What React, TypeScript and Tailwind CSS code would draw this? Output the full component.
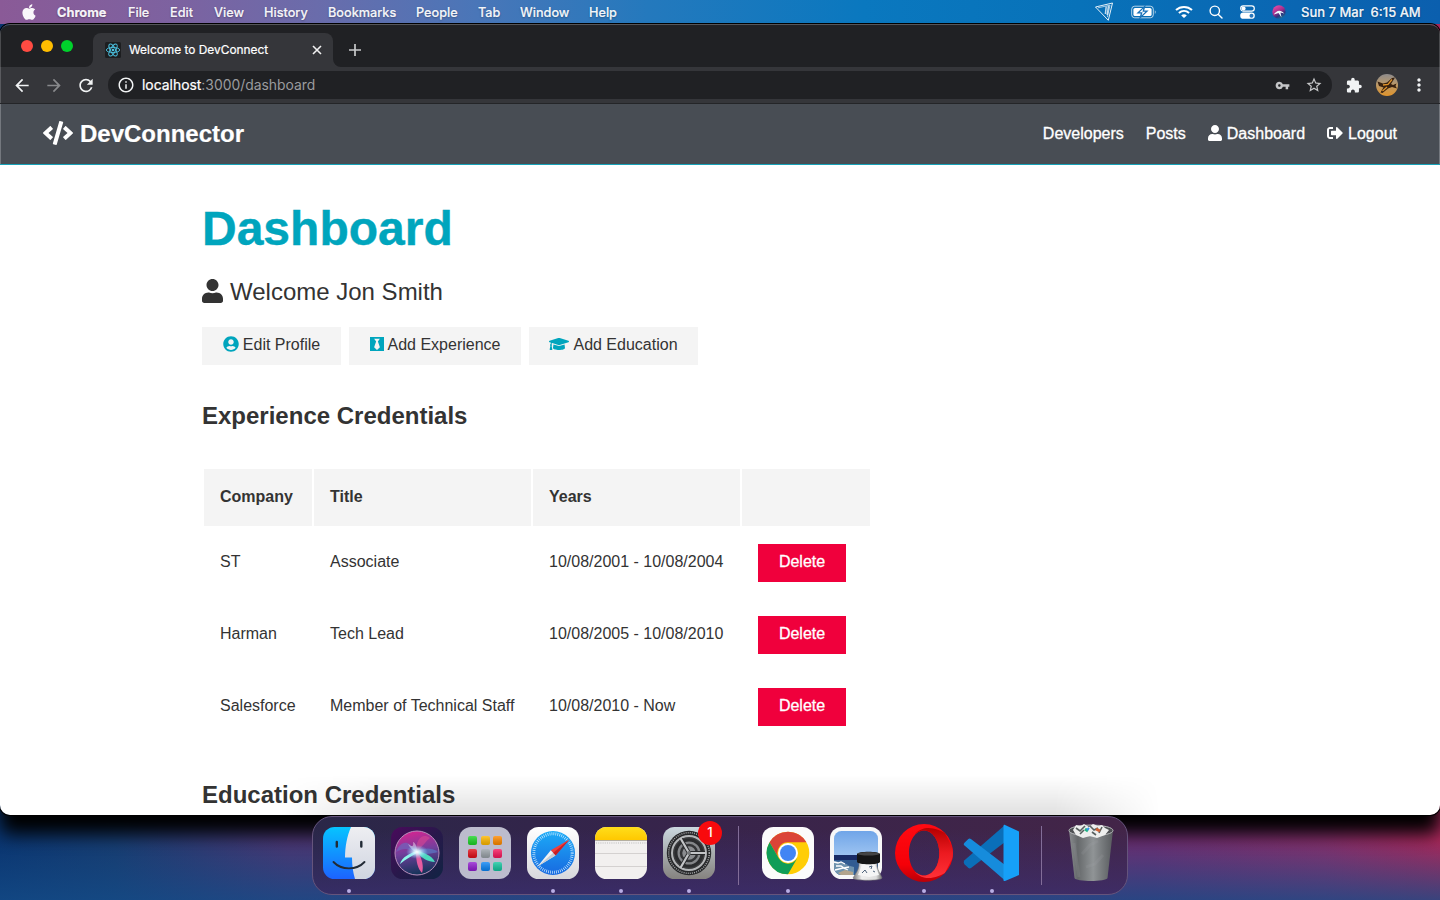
import React from "react";
import {
  FaApple,
  FaBlackTie,
  FaCode,
  FaGraduationCap,
  FaSignOutAlt,
  FaUser,
  FaUserCircle,
} from "react-icons/fa";
import {
  MdArrowBack,
  MdArrowForward,
  MdExtension,
  MdInfoOutline,
  MdMoreVert,
  MdRefresh,
  MdStarOutline,
  MdVpnKey,
} from "react-icons/md";

const menuItems = [
  { label: "File", width: "w-[42px]" },
  { label: "Edit", width: "w-[44px]" },
  { label: "View", width: "w-[50px]" },
  { label: "History", width: "w-[64px]" },
  { label: "Bookmarks", width: "w-[88px]" },
  { label: "People", width: "w-[62px]" },
  { label: "Tab", width: "w-[42px]" },
  { label: "Window", width: "w-[69px]" },
  { label: "Help", width: "w-[40px]" },
];

const experience = [
  { company: "ST", title: "Associate", years: "10/08/2001 - 10/08/2004" },
  { company: "Harman", title: "Tech Lead", years: "10/08/2005 - 10/08/2010" },
  { company: "Salesforce", title: "Member of Technical Staff", years: "10/08/2010 - Now" },
];

function MenuBar() {
  return (
    <div className="flex h-6 items-center whitespace-nowrap bg-[linear-gradient(90deg,#8a5a97_0%,#7d62a0_12%,#6a6cab_22%,#4a76b8_33%,#2479bd_45%,#0a78bf_60%,#0872b9_75%,#0a66b2_90%,#0b5fae_100%)] pt-px font-['Inter','Noto_Sans',sans-serif] text-[13px] font-medium text-white/95 [text-shadow:0_1px_2px_rgb(0_0_0/0.3)] [-webkit-text-stroke:0.2px]">
      <FaApple className="mb-0.5 ml-5 mr-[19px] h-[18px] w-[18px]" />
      <span className="w-[71px] text-[12.8px] font-bold">Chrome</span>
      {menuItems.map((m) => (
        <span key={m.label} className={`${m.width} text-[12.7px]`}>
          {m.label}
        </span>
      ))}
      <div className="ml-auto flex items-center">
        <svg width="20" height="20" viewBox="0 0 20 20" fill="none" stroke="#fff" strokeWidth="0.9" className="mb-px mr-[17px]">
          <path d="M1.500 5 18.500 1 14.300 18.300Z" />
          <path d="M4 5.8 16 3.2 13.4 15" opacity=".7" />
          <path d="M12.2 4.5 11.4 12M14.5 4l-1.3 9" strokeWidth="1.5" opacity=".75" />
        </svg>
        <svg width="26" height="14" viewBox="0 0 26 14" fill="none" className="mb-0.5 mr-[18px]">
          <rect x=".7" y="1.2" width="21.6" height="11.6" rx="3" stroke="#fff" strokeOpacity=".7" />
          <rect x="2.4" y="2.9" width="18.2" height="8.2" rx="1.6" fill="#fff" />
          <path d="M13.6 1.600 7 7.800h3.700L9.200 12.600l6.800-6.400h-3.700z" fill="#fff" stroke="#1670b8" strokeWidth="1.3" />
          <path d="M23.8 5.2v3.6c1.2-.5 1.2-3.1 0-3.6Z" fill="#fff" fillOpacity=".7" />
        </svg>
        <svg width="18" height="14" viewBox="0 0 18 14" fill="none" stroke="#fff" strokeWidth="2" className="mb-0.5 mr-[16px]">
          <path d="M1 5.1C5.5.9 12.5.9 17 5.1M3.9 8.1c3-2.7 7.2-2.7 10.2 0" />
          <path d="M9 13 6.2 10.4c1.7-1.5 3.900-1.500 5.600 0Z" fill="#fff" stroke="none" />
        </svg>
        <svg width="14" height="14" viewBox="0 0 14 14" fill="none" stroke="#fff" strokeWidth="1.4" strokeLinecap="round" className="mb-0.5 mr-[17px]">
          <circle cx="5.8" cy="5.8" r="4.7" />
          <path d="m9.4 9.4 3.6 3.7" />
        </svg>
        <svg width="15" height="14" viewBox="0 0 15 14" className="mb-px mr-[17px]">
          <rect x=".7" y=".9" width="13.6" height="5.2" rx="2.6" fill="none" stroke="#fff" strokeWidth="1.2" />
          <circle cx="3.6" cy="3.5" r="2" fill="#fff" />
          <rect x=".2" y="7.5" width="14.6" height="6.3" rx="3.15" fill="#fff" />
          <circle cx="11.5" cy="10.65" r="2" fill="#2a77bb" />
        </svg>
        <svg width="14" height="14" viewBox="0 0 14 14" className="mb-0.5 mr-[15px]">
          <defs>
            <linearGradient id="siri-small" x1=".2" y1="0" x2=".8" y2="1">
              <stop offset="0" stopColor="#f04ba6" />
              <stop offset=".45" stopColor="#a32e8c" />
              <stop offset=".7" stopColor="#2d347e" />
              <stop offset="1" stopColor="#147f9c" />
            </linearGradient>
          </defs>
          <circle cx="7" cy="7" r="6.7" fill="url(#siri-small)" />
          <path d="M1.8 9.5C4 6 8 3.5 12.3 8.500L8.500 7.500l1 5-3-4.500Z" fill="#e9fbff" />
        </svg>
        <span className="mr-[18px] w-[121px] whitespace-pre text-[13px]">Sun 7 Mar  6:15 AM</span>
      </div>
    </div>
  );
}

function ReactFavicon() {
  return (
    <svg width="16" height="16" viewBox="0 0 16 16" className="ml-3">
      <rect width="16" height="16" rx="1.5" fill="#1d1e20" />
      <g fill="none" stroke="#4cc3e2" strokeWidth=".9">
        <ellipse cx="8" cy="8" rx="6.7" ry="2.6" />
        <ellipse cx="8" cy="8" rx="6.7" ry="2.6" transform="rotate(60 8 8)" />
        <ellipse cx="8" cy="8" rx="6.7" ry="2.6" transform="rotate(120 8 8)" />
      </g>
      <circle cx="8" cy="8" r="1.3" fill="#4cc3e2" />
    </svg>
  );
}

function Avatar() {
  return (
    <svg width="22" height="22" viewBox="0 0 22 22" className="ml-[13px]">
      <defs>
        <linearGradient id="sky" x1="0" y1="0" x2="0" y2="1">
          <stop offset="0" stopColor="#8d8b8c" />
          <stop offset=".45" stopColor="#b9996c" />
          <stop offset="1" stopColor="#e0942b" />
        </linearGradient>
      </defs>
      <circle cx="11" cy="11" r="11" fill="url(#sky)" />
      <path d="m1.500 7.500 5.500 2 4-1 5-4.500 3-.5-4 6.500 2 1 3.500-1.500-1 2.500 1.500 2.500-5-1.500-4 1.500-5.500 4.500-2-.5 3-5-4.500-1.500Z" fill="#38210f" />
      <path d="m7 11 5-.5 4-5M6.500 17l4.500-4" stroke="#e0932a" strokeWidth="1.300" fill="none" />
    </svg>
  );
}

function TabStrip() {
  return (
    <div className="flex h-[42px] items-end bg-[#202124] shadow-[inset_1px_0_#4a4b4e,inset_-1px_0_#4a4b4e]">
      <div className="flex h-full w-[85px] items-center gap-2 pl-[21px]">
        <span className="h-3 w-3 rounded-full bg-[#ff4b42]" />
        <span className="h-3 w-3 rounded-full bg-[#ffbd00]" />
        <span className="h-3 w-3 rounded-full bg-[#00d12c]" />
      </div>
      <svg width="8" height="8" viewBox="0 0 8 8">
        <path d="M8 0v8H0a8 8 0 0 0 8-8Z" fill="#35363a" />
      </svg>
      <div className="flex h-[34px] w-60 items-center rounded-t-lg bg-[#35363a]">
        <ReactFavicon />
        <span className="ml-2 w-[180px] whitespace-nowrap font-['Inter','Noto_Sans',sans-serif] text-[11.9px] text-white [-webkit-text-stroke:0.2px]">
          Welcome to DevConnect
        </span>
        <svg width="10" height="10" viewBox="0 0 10 10" stroke="#f1f1f1" strokeWidth="1.6" className="ml-[3px]">
          <path d="m1 1 8 8M9 1 1 9" />
        </svg>
      </div>
      <svg width="8" height="8" viewBox="0 0 8 8">
        <path d="M0 0v8h8a8 8 0 0 1-8-8Z" fill="#35363a" />
      </svg>
      <svg width="12" height="12" viewBox="0 0 12 12" stroke="#c9cacc" strokeWidth="1.7" className="mb-[11px] ml-2">
        <path d="M6 0v12M0 6h12" />
      </svg>
    </div>
  );
}

function Toolbar() {
  return (
    <div className="flex h-[37px] items-center border-b border-[#242528] bg-[#35363a] text-[#f1f3f4] shadow-[inset_1px_0_#5a5b5f,inset_-1px_0_#5a5b5f]">
      <MdArrowBack className="ml-3 h-[21px] w-5" />
      <MdArrowForward className="ml-3 h-[21px] w-5 text-[#88898c]" />
      <MdRefresh className="ml-3 h-[21px] w-5" />
      <div className="ml-3 flex h-7 w-[1224px] items-center rounded-full bg-[#202124]">
        <MdInfoOutline className="ml-[9px] h-[18px] w-[18px]" />
        <span className="ml-[7px] font-['Inter','Noto_Sans',sans-serif] text-[13.9px] text-[#9a9b9e]">
          <span className="text-white [-webkit-text-stroke:0.2px]">localhost</span>:3000/dashboard
        </span>
        <MdVpnKey className="ml-auto h-[15px] w-[15px] text-[#c4c5c7]" />
        <MdStarOutline className="ml-[15px] mr-[9px] h-[18px] w-[18px] text-[#c4c5c7]" />
      </div>
      <MdExtension className="ml-[13px] h-[17px] w-[18px]" />
      <Avatar />
      <MdMoreVert className="ml-[11px] h-5 w-5" />
    </div>
  );
}

function SiteNav() {
  return (
    <nav className="flex h-[61px] items-center justify-between border-b border-[#17a2b8] bg-[#484d54] px-[43px] pb-px text-white shadow-[inset_1px_0_#74787e,inset_-1px_0_#74787e]">
      <div className="flex items-center text-2xl font-bold [-webkit-text-stroke:0.2px]">
        <FaCode className="mb-px mr-[7px] h-6 w-[30px]" />
        <span>DevConnector</span>
      </div>
      <div className="flex items-center gap-[22px] text-base [-webkit-text-stroke:0.3px]">
        <span>Developers</span>
        <span>Posts</span>
        <span className="flex items-center gap-[5px]">
          <FaUser className="mb-0.5 h-4 w-3.5" />
          Dashboard
        </span>
        <span className="flex items-center gap-[5px]">
          <FaSignOutAlt className="mb-0.5 h-4 w-4" />
          Logout
        </span>
      </div>
    </nav>
  );
}

function DashboardPage() {
  return (
    <main className="h-[650px] overflow-hidden bg-white pl-[202px] pt-[35px] text-[#333]">
      <h1 className="h-[58px] text-5xl font-bold leading-[58px] text-[#00a5bd] [-webkit-text-stroke:0.4px]">Dashboard</h1>
      <p className="mt-[15px] flex h-[38px] items-center text-2xl">
        <FaUser className="mb-0.5 mr-[7px] h-6 w-[21px]" />
        Welcome Jon Smith
      </p>
      <div className="mt-4 flex gap-2 text-base">
        <button className="flex h-[38px] w-[139px] items-center justify-center gap-1 bg-[#f4f4f4] pb-[3px]">
          <FaUserCircle className="mb-0.5 h-4 w-4 text-[#00a5bd]" />
          Edit Profile
        </button>
        <button className="flex h-[38px] w-[172px] items-center justify-center gap-1 bg-[#f4f4f4] pb-[3px]">
          <FaBlackTie className="mb-0.5 h-4 w-3.5 text-[#00a5bd]" />
          Add Experience
        </button>
        <button className="flex h-[38px] w-[169px] items-center justify-center gap-1 bg-[#f4f4f4] pb-[3px]">
          <FaGraduationCap className="mb-0.5 h-4 w-5 text-[#00a5bd]" />
          Add Education
        </button>
      </div>
      <h2 className="mt-8 h-[38px] text-2xl font-bold leading-[38px]">Experience Credentials</h2>
      <table className="mt-8 w-[670px] table-fixed border-separate border-spacing-0.5 text-left text-base">
        <thead>
          <tr className="h-[57px]">
            <th className="w-[108px] bg-[#f4f4f4] px-4 pb-0.5">Company</th>
            <th className="w-[217px] bg-[#f4f4f4] px-4 pb-0.5">Title</th>
            <th className="w-[207px] bg-[#f4f4f4] px-4 pb-0.5">Years</th>
            <th className="w-[128px] bg-[#f4f4f4]" />
          </tr>
        </thead>
        <tbody>
          {experience.map((row) => (
            <tr key={row.company} className="h-[70px]">
              <td className="px-4 pb-[3px]">{row.company}</td>
              <td className="whitespace-nowrap px-4 pb-[3px]">{row.title}</td>
              <td className="whitespace-nowrap pb-[3px] pl-4">{row.years}</td>
              <td className="px-4">
                <button className="flex h-[38px] w-[88px] items-center justify-center bg-[#f0003c] pb-[3px] text-white [-webkit-text-stroke:0.3px]">
                  Delete
                </button>
              </td>
            </tr>
          ))}
        </tbody>
      </table>
      <h2 className="mt-8 h-[38px] text-2xl font-bold leading-[38px]">Education Credentials</h2>
    </main>
  );
}

function FinderIcon() {
  return (
    <svg width="52" height="52" viewBox="0 0 52 52">
      <defs>
        <linearGradient id="fb" x1="0" y1="0" x2="0" y2="1">
          <stop offset="0" stopColor="#06c4ff" />
          <stop offset="1" stopColor="#1c63ff" />
        </linearGradient>
        <linearGradient id="fw" x1="0" y1="0" x2="0" y2="1">
          <stop offset="0" stopColor="#eeeef2" />
          <stop offset="1" stopColor="#cfd5e0" />
        </linearGradient>
        <clipPath id="fc"><rect width="52" height="52" rx="11.5" /></clipPath>
      </defs>
      <g clipPath="url(#fc)">
        <rect width="52" height="52" fill="url(#fb)" />
        <path d="M28 0c-4 9-6 20-6 30.500h7c0 8 1 15 3 21.500h20V0Z" fill="url(#fw)" />
      </g>
      <path d="M13.8 15v4.500M38.3 15v4.500" stroke="#222b35" strokeWidth="2.4" strokeLinecap="round" />
      <path d="M10.500 35c8 8.500 23 8.500 31 0" fill="none" stroke="#222b35" strokeWidth="1.9" strokeLinecap="round" />
    </svg>
  );
}

function SiriIcon() {
  return (
    <svg width="52" height="52" viewBox="0 0 52 52">
      <defs>
        <linearGradient id="sbg" x1="0" y1="0" x2="1" y2="1">
          <stop offset="0" stopColor="#4a0a5c" />
          <stop offset=".5" stopColor="#29184b" />
          <stop offset="1" stopColor="#102443" />
        </linearGradient>
        <linearGradient id="orb" x1=".4" y1="0" x2=".6" y2="1">
          <stop offset="0" stopColor="#d22591" />
          <stop offset=".45" stopColor="#733f9d" />
          <stop offset="1" stopColor="#0e3354" />
        </linearGradient>
        <radialGradient id="glow">
          <stop offset="0" stopColor="#fff" />
          <stop offset=".3" stopColor="#d9f4ff" stopOpacity=".85" />
          <stop offset="1" stopColor="#77c6ff" stopOpacity="0" />
        </radialGradient>
      </defs>
      <rect width="52" height="52" rx="11.5" fill="url(#sbg)" />
      <circle cx="26" cy="26" r="22" fill="url(#orb)" stroke="#b98fbd" strokeWidth="1" />
      <path d="M25 25C16 10 9 16 5 25c8-5 13-3 20 0Z" fill="#6e65bd" opacity=".7" />
      <path d="M25 25C25 11 32 6 39 11c-4 3-7 8-14 14Z" fill="#dc4894" opacity=".55" />
      <path d="M25 25c7-4 14-5 22 0-7 2-14 3-22 0Z" fill="#5a7bc4" opacity=".7" />
      <path d="M26 24C19 26 11 30 9 37c6-5 12-8 17-11Z" fill="#8ef6ea" />
      <path d="M26 24c8 2 14 4 18 11-7 0-13-4-18-9Z" fill="#4bd9bd" />
      <path d="M25 25c0 10 2 17 6 21 2-7 0-14-4-21Z" fill="#e65ca0" />
      <path d="M22 15c3 1 4 6 4 10-4-1-7-4-9-8 4 3 6 3 5-2Z" fill="#fff" opacity=".45" />
      <ellipse cx="26" cy="25" rx="11" ry="7" fill="url(#glow)" />
    </svg>
  );
}

const launchColors = ["#1fd52a", "#ffb800", "#ff8a00", "#e3101c", "#9ba3a9", "#f8195e", "#9321d1", "#0e86f6", "#16c7a0"];

function LaunchpadIcon() {
  return (
    <div className="grid h-[52px] w-[52px] grid-cols-[repeat(3,9px)] content-center justify-center gap-x-[3.5px] gap-y-1 rounded-[12px] bg-[#bcbccd]">
      {launchColors.map((c) => (
        <span
          key={c}
          className="h-[9px] w-[9px] rounded-[2px] bg-linear-to-b from-white/20 to-black/15"
          style={{ backgroundColor: c }}
        />
      ))}
    </div>
  );
}

function SafariIcon() {
  return (
    <svg width="52" height="52" viewBox="0 0 52 52">
      <defs>
        <linearGradient id="sf" x1="0" y1="0" x2="0" y2="1">
          <stop offset="0" stopColor="#1cabf7" />
          <stop offset="1" stopColor="#1869e0" />
        </linearGradient>
        <linearGradient id="sfb" x1="0" y1="0" x2="0" y2="1">
          <stop offset="0" stopColor="#fff" />
          <stop offset="1" stopColor="#d8d8dc" />
        </linearGradient>
      </defs>
      <rect width="52" height="52" rx="11.5" fill="url(#sfb)" />
      <circle cx="26" cy="26" r="22" fill="url(#sf)" />
      <circle cx="26" cy="26" r="19.2" fill="none" stroke="#d4efff" strokeWidth="3" strokeDasharray=".7 1.31" />
      <path d="M42.500 12.500 23.800 23.300 28.500 28.500Z" fill="#ef3e3b" />
      <path d="M23.800 23.300 28.500 28.500 10.500 39.500Z" fill="#f1f1f3" />
      <path d="M42.500 12.500 26 26l2.500 2.500Z" fill="#c81f26" />
      <path d="m10.500 39.500 15.500-13.500 2.500 2.500Z" fill="#c7ccd4" />
    </svg>
  );
}

function NotesIcon() {
  return (
    <svg width="52" height="52" viewBox="0 0 52 52">
      <defs>
        <clipPath id="nc"><rect width="52" height="52" rx="11.5" /></clipPath>
        <linearGradient id="ny" x1="0" y1="0" x2="0" y2="1">
          <stop offset="0" stopColor="#ffde1b" />
          <stop offset="1" stopColor="#ffc800" />
        </linearGradient>
      </defs>
      <g clipPath="url(#nc)">
        <rect width="52" height="52" fill="#f2f0ef" />
        <rect width="52" height="13" fill="url(#ny)" />
        <path d="M0 13.500h52" stroke="#b5afa0" />
        <path d="M1 16h52" stroke="#bbb" strokeWidth="1.2" strokeDasharray="1 1.2" />
        <path d="M0 26.500h52M0 39.500h52" stroke="#d4d1d0" />
      </g>
    </svg>
  );
}

function SettingsIcon() {
  return (
    <svg width="52" height="52" viewBox="0 0 52 52">
      <defs>
        <linearGradient id="gs" x1="0" y1="0" x2="0" y2="1">
          <stop offset="0" stopColor="#cbd8df" />
          <stop offset="1" stopColor="#85827f" />
        </linearGradient>
      </defs>
      <rect width="52" height="52" rx="11.5" fill="url(#gs)" />
      <circle cx="26" cy="26" r="22.2" fill="#27282a" />
      <circle cx="26" cy="26" r="20.3" fill="none" stroke="#a3a5a7" strokeWidth="1.5" strokeDasharray="1 1.13" />
      <circle cx="26" cy="26" r="17" fill="#3c3d3f" stroke="#b4b6b8" strokeWidth="2" />
      <circle cx="26" cy="26" r="13" fill="#85878a" stroke="#2b2c2e" strokeWidth="3" />
      <circle cx="26" cy="26" r="8" fill="#8b8d90" stroke="#343537" strokeWidth="2.5" />
      <path d="M26 26h16M26 26 18 12M26 26l-8 14" stroke="#292a2c" strokeWidth="4" />
      <path d="M26 26h17M26 26 17.500 11.300M26 26l-8.500 14.700" stroke="#c3c5c7" strokeWidth="2.2" />
      <circle cx="26" cy="26" r="2" fill="#77797b" />
    </svg>
  );
}

function ChromeIcon() {
  return (
    <svg width="52" height="52" viewBox="0 0 52 52">
      <rect width="52" height="52" rx="11.5" fill="#fbfbfb" />
      <circle cx="26" cy="26" r="21.3" fill="#ffcd05" />
      <path d="M7.550 15.350A21.300 21.300 0 0 1 44.450 15.350H26A10.650 10.650 0 0 0 16.780 31.330Z" fill="#db4437" />
      <path d="M7.550 15.350A21.300 21.300 0 0 0 26 47.300L35.220 31.330A10.650 10.650 0 0 1 16.780 31.330Z" fill="#0f9d58" />
      <circle cx="26" cy="26" r="10" fill="#fff" />
      <circle cx="26" cy="26" r="8" fill="#4285f4" />
    </svg>
  );
}

function PreviewIcon() {
  return (
    <svg width="54" height="54" viewBox="0 0 54 54" className="ml-0.5 mt-0.5">
      <defs>
        <linearGradient id="ps" x1="0" y1="0" x2="0" y2="1">
          <stop offset="0" stopColor="#70a5e8" />
          <stop offset="1" stopColor="#c1dcf8" />
        </linearGradient>
        <linearGradient id="glass" x1="0" y1="0" x2="1" y2="0">
          <stop offset="0" stopColor="#777" />
          <stop offset=".3" stopColor="#eee" />
          <stop offset=".8" stopColor="#ddd" />
          <stop offset="1" stopColor="#777" />
        </linearGradient>
      </defs>
      <rect width="52" height="52" rx="11.5" fill="#f7f7f8" />
      <rect x="4" y="4" width="44" height="44" rx="7.5" fill="url(#ps)" />
      <path d="M4 28h44v12.500a7.500 7.500 0 0 1-7.500 7.500h-29A7.500 7.500 0 0 1 4 40.500Z" fill="#315c92" />
      <path d="M4 28h44v5H4Z" fill="#192b66" />
      <path d="m4 34 6 1 4 2 4 0-2 1 8 2v8H11c-4 0-7-4-7-8Z" fill="#6f93ae" />
      <path d="m4 35 4 1 3-1 4 2M6 39l5 0 3 2 5-1M5 43l8-2 5 2" stroke="#fff" strokeWidth="1.3" fill="none" />
      <path d="m8 46 7-3 8 2v3H11Z" fill="#b2a48d" />
      <path d="M29 35h18v4c1 5 3 7 5 12-1 3-28 3-29 0 3-5 5-7 6-12Z" fill="url(#glass)" stroke="#777" strokeWidth=".6" />
      <path d="m28 48 4-10h13l4 10-10 2Z" fill="#f5f5f5" />
      <path d="m32 46 3-3 2 3m2-6 3-1-1 3m2 2 2 1" stroke="#50647c" fill="none" />
      <path d="M27 27c1-3 22-3 23 0v8c-1 3-22 3-23 0Z" fill="#151515" />
      <ellipse cx="38.5" cy="26.8" rx="11" ry="1.8" fill="#444" />
    </svg>
  );
}

function OperaIcon() {
  return (
    <svg width="58" height="58" viewBox="0 0 58 58">
      <defs>
        <linearGradient id="o1" x1="0" y1="0" x2="0" y2="1">
          <stop offset="0" stopColor="#ff0a12" />
          <stop offset=".7" stopColor="#f50008" />
          <stop offset="1" stopColor="#b80008" />
        </linearGradient>
        <linearGradient id="o2" x1="0" y1="0" x2="0" y2="1">
          <stop offset="0" stopColor="#b50000" />
          <stop offset=".5" stopColor="#ec1a20" />
          <stop offset="1" stopColor="#ff3138" />
        </linearGradient>
        <clipPath id="ring">
          <path
            clipRule="evenodd"
            d="M29 0a29 29 0 1 1 0 58 29 29 0 1 1 0-58ZM29 6.500C20.500 6.500 14 16.500 14 29.200S20.500 51.500 29 51.500s15.300-9.600 15.300-22.300S37.500 6.500 29 6.500Z"
          />
        </clipPath>
      </defs>
      <g clipPath="url(#ring)">
        <rect width="58" height="58" fill="url(#o1)" />
        <path d="M20 10C25 4 33 3 38 4.500 45 6 50 9 50 9L60 29 50 49s-5 3-12 4.500C33 55 25 54 20 48l9 3 15-22L29 7Z" fill="url(#o2)" />
      </g>
    </svg>
  );
}

function CodeIcon() {
  return (
    <svg width="58" height="58" viewBox="0 0 58 58">
      <path d="M42 1v17L8 44c-.8.6-1.800.6-2.600 0L1.500 40.300c-1-1-1-3 0-4Z" fill="#0a6fb9" />
      <path d="M1.500 18.700 5.300 15c.8-.7 1.800-.7 2.600 0L42 41v15.500L1.500 21.500c-1-.8-1-2 0-2.800Z" fill="#168cdc" />
      <path d="M42 1 56 7.500V51L42 57c-1 .4-1.500-.4-1.500-1V2c0-.8.7-1.400 1.500-1Z" fill="#16a0f8" />
    </svg>
  );
}

function TrashIcon() {
  return (
    <svg width="48" height="60" viewBox="0 0 48 60">
      <defs>
        <linearGradient id="tr" x1="0" y1="0" x2="1" y2="0">
          <stop offset="0" stopColor="#8a8d90" />
          <stop offset=".2" stopColor="#66696b" />
          <stop offset=".55" stopColor="#909496" />
          <stop offset="1" stopColor="#585b5e" />
        </linearGradient>
      </defs>
      <path d="M2 7h44l-5.500 48c-1 4-32 4-33 0Z" fill="url(#tr)" />
      <ellipse cx="24" cy="7.5" rx="22" ry="5.5" fill="#4e5053" stroke="#b9bbbd" />
      <path d="m6 7 3-5 5 1 3-2 5 3 4-3 5 2 4-1 3 3 4 2-4 5-8 3-7-2-7 2-7-3Z" fill="#edeeed" />
      <path d="m9 5 4 3 5-5m5 0 4 4 4-2m4-1-3 6m-19 1 4-4m8 2 4 3" stroke="#58605f" strokeWidth="1.6" fill="none" />
      <path d="m18 6 3 2" stroke="#20b780" strokeWidth="3" />
      <path d="m29 6 4 2" stroke="#cf6235" strokeWidth="3" />
      <path d="m20 7 2-2" stroke="#3290ef" strokeWidth="2" />
      <path d="m7 20 5 34M15 31l8-9 8-4m-12 26 9-3 8-9" stroke="#a8abad" opacity=".15" strokeWidth="3" fill="none" />
    </svg>
  );
}

function DockItem({ children, running = false, badge }: { children: React.ReactNode; running?: boolean; badge?: string }) {
  return (
    <div className="relative flex h-full w-[68px] flex-col items-center">
      <div className="flex h-[72px] items-center">{children}</div>
      {running && <span className="h-1 w-1 rounded-full bg-[#b9aee5]" />}
      {badge && (
        <span className="absolute left-[43px] top-1 flex h-6 w-6 items-center justify-center rounded-full bg-[#f80a0d] font-['Inter','Noto_Sans',sans-serif] text-[13px] font-medium text-white">
          {badge}
        </span>
      )}
    </div>
  );
}

function DockDivider() {
  return (
    <div className="flex h-full w-[31px] justify-center pt-[9px]">
      <span className="h-[59px] w-px bg-[#826d98]" />
    </div>
  );
}

function Dock() {
  return (
    <div className="relative flex h-[85px] justify-center pt-px">
      <div className="flex h-[79px] w-[816px] rounded-[20px] border border-[#65547c] bg-[linear-gradient(0deg,rgb(60_48_116/0.65),transparent_85%),linear-gradient(90deg,#2a2748_0%,#36244b_40%,#432548_100%)] pl-0.5">
        <DockItem running><FinderIcon /></DockItem>
        <DockItem><SiriIcon /></DockItem>
        <DockItem><LaunchpadIcon /></DockItem>
        <DockItem running><SafariIcon /></DockItem>
        <DockItem running><NotesIcon /></DockItem>
        <DockItem running badge="1"><SettingsIcon /></DockItem>
        <DockDivider />
        <DockItem running><ChromeIcon /></DockItem>
        <DockItem><PreviewIcon /></DockItem>
        <DockItem running><OperaIcon /></DockItem>
        <DockItem running><CodeIcon /></DockItem>
        <DockDivider />
        <DockItem><TrashIcon /></DockItem>
      </div>
    </div>
  );
}

export default function App() {
  return (
    <div className="flex h-[900px] w-[1440px] flex-col overflow-hidden bg-black font-['Liberation_Sans',Arial,sans-serif]">
      <MenuBar />
      <div className="flex flex-1 flex-col bg-[linear-gradient(0deg,rgb(20_76_136/0.75)_0px,transparent_60px),linear-gradient(90deg,#0a3570_0%,#173c70_8%,#4a3672_20%,#633071_50%,#6b2f72_80%,#86306c_92%,#a8285a_100%)]">
        <div className="relative h-[791px] overflow-hidden rounded-[10px] border-t border-t-[#55565a] shadow-[0_19px_18px_#000,0_0_0_1px_#000]">
          <TabStrip />
          <Toolbar />
          <SiteNav />
          <DashboardPage />
          <div className="pointer-events-none absolute bottom-0 left-[280px] h-10 w-[880px] bg-linear-to-t from-black/12 to-transparent [mask-image:linear-gradient(90deg,transparent,#000_12%,#000_88%,transparent)]" />
        </div>
        <Dock />
      </div>
    </div>
  );
}
